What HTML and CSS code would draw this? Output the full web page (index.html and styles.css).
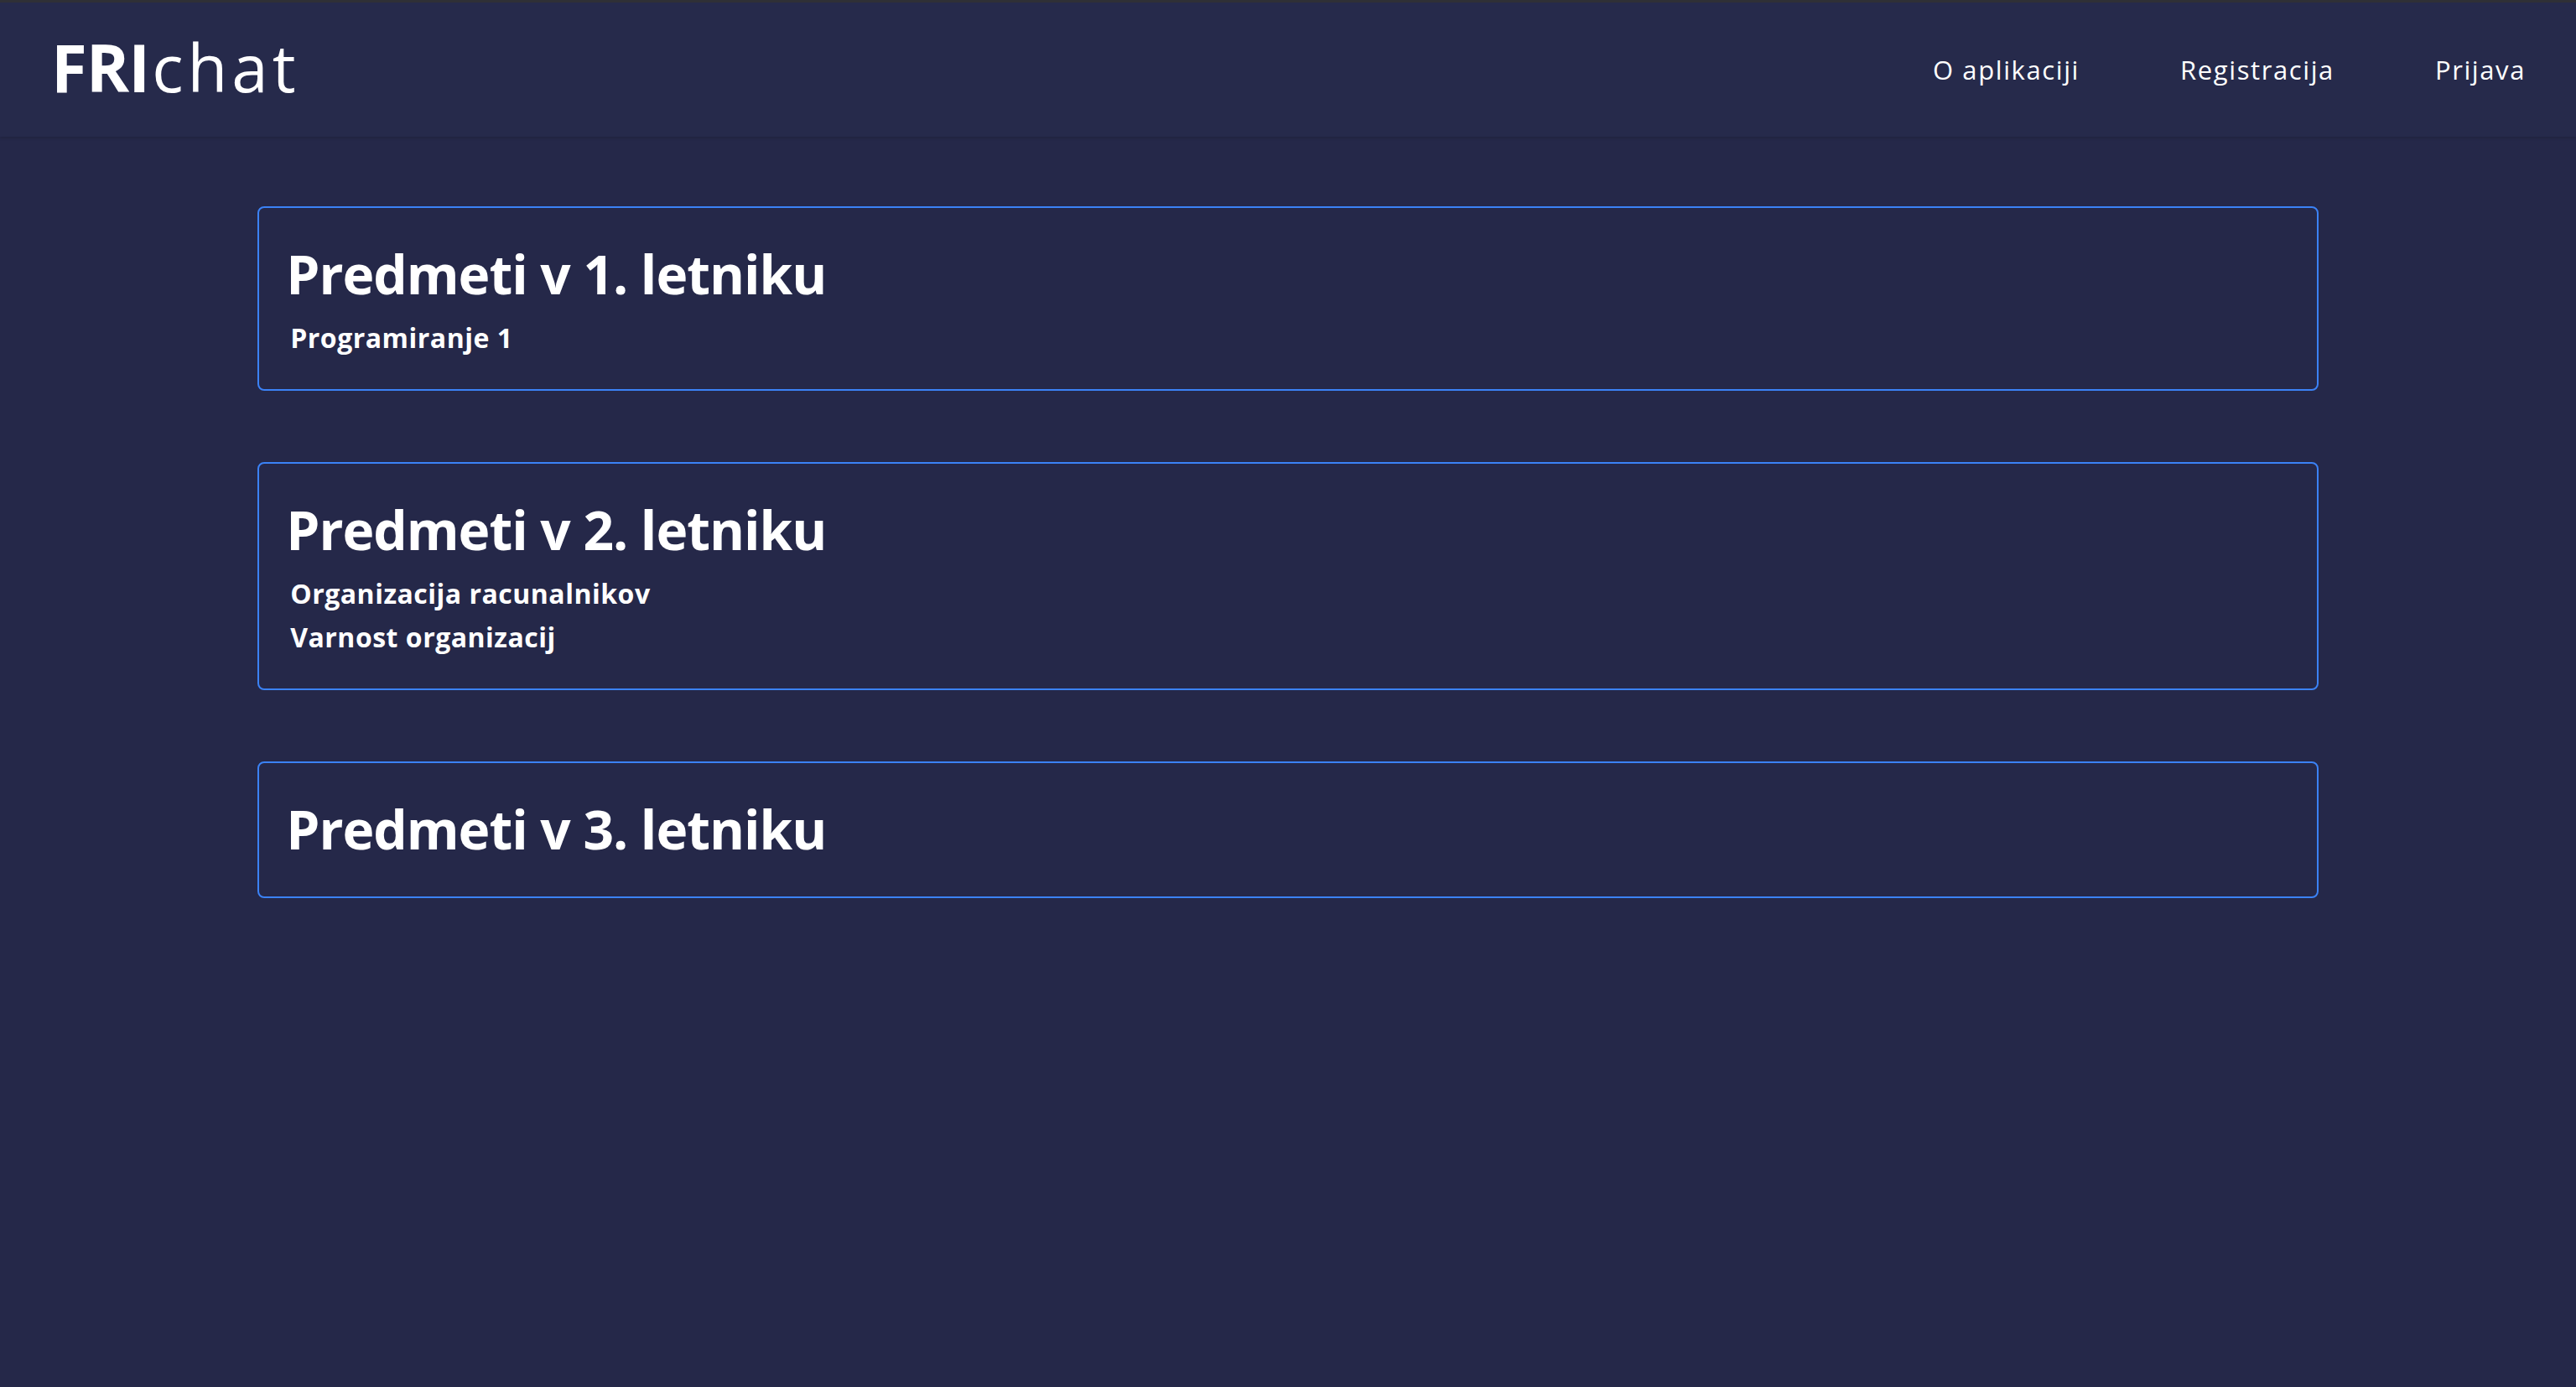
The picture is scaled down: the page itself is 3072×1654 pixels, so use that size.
FILE: index.html
```html
<!DOCTYPE html>
<html lang="sl">
<head>
<meta charset="utf-8">
<title>FRIchat</title>
<link rel="stylesheet" href="styles.css">
</head>
<body>
<header class="topbar">
  <div class="logo"><span class="logo-bold">FRI</span><span class="logo-light">chat</span></div>
  <nav class="nav">
    <a class="nav-link" href="#">O aplikaciji</a>
    <a class="nav-link" href="#">Registracija</a>
    <a class="nav-link" href="#">Prijava</a>
  </nav>
</header>
<main class="content">
  <section class="card">
    <h1 class="card-title">Predmeti v 1. letniku</h1>
    <ul class="subjects">
      <li class="subject">Programiranje 1</li>
    </ul>
  </section>
  <section class="card">
    <h1 class="card-title">Predmeti v 2. letniku</h1>
    <ul class="subjects">
      <li class="subject">Organizacija racunalnikov</li>
      <li class="subject">Varnost organizacij</li>
    </ul>
  </section>
  <section class="card">
    <h1 class="card-title">Predmeti v 3. letniku</h1>
  </section>
</main>
</body>
</html>
```

FILE: styles.css
```css
html, body {
  margin: 0;
  padding: 0;
}

body {
  background: #252849;
  color: #ffffff;
  font-family: "Open Sans", "Liberation Sans", sans-serif;
  min-height: 1654px;
}

.topbar {
  box-sizing: border-box;
  height: 163px;
  border-top: 3px solid #2f3036;
  background: #262a4b;
  box-shadow: 0 2px 3px rgba(0, 0, 0, 0.12);
  display: flex;
  align-items: center;
  justify-content: space-between;
  padding: 0 60px 0 61px;
}

.logo {
  font-size: 78px;
  line-height: 1;
  margin-bottom: 6px;
  white-space: nowrap;
}

.logo-bold {
  font-weight: 700;
  letter-spacing: -1px;
}

.logo-light {
  font-weight: 400;
  letter-spacing: 5px;
  margin-left: 3px;
}

.nav {
  display: flex;
  gap: 120px;
}

.nav-link {
  color: #ffffff;
  text-decoration: none;
  font-size: 31px;
  line-height: 1;
  letter-spacing: 1.6px;
  font-weight: 400;
}

.content {
  display: flex;
  flex-direction: column;
  gap: 85px;
  padding-top: 83px;
}

.card {
  box-sizing: border-box;
  width: 80%;
  margin: 0 auto;
  border: 2px solid #3b82f6;
  border-radius: 8px;
  padding: 39px 32px 35px 32px;
  display: flex;
  flex-direction: column;
}

.card-title {
  margin: 0 0 5px 0;
  font-size: 64px;
  line-height: 80px;
  font-weight: 700;
  letter-spacing: -1px;
}

.subjects {
  list-style: none;
  margin: 5px 0 0 0;
  padding: 0 0 0 5px;
}

.subject {
  font-size: 32px;
  line-height: 52px;
  font-weight: 700;
  letter-spacing: 0.5px;
}
```
